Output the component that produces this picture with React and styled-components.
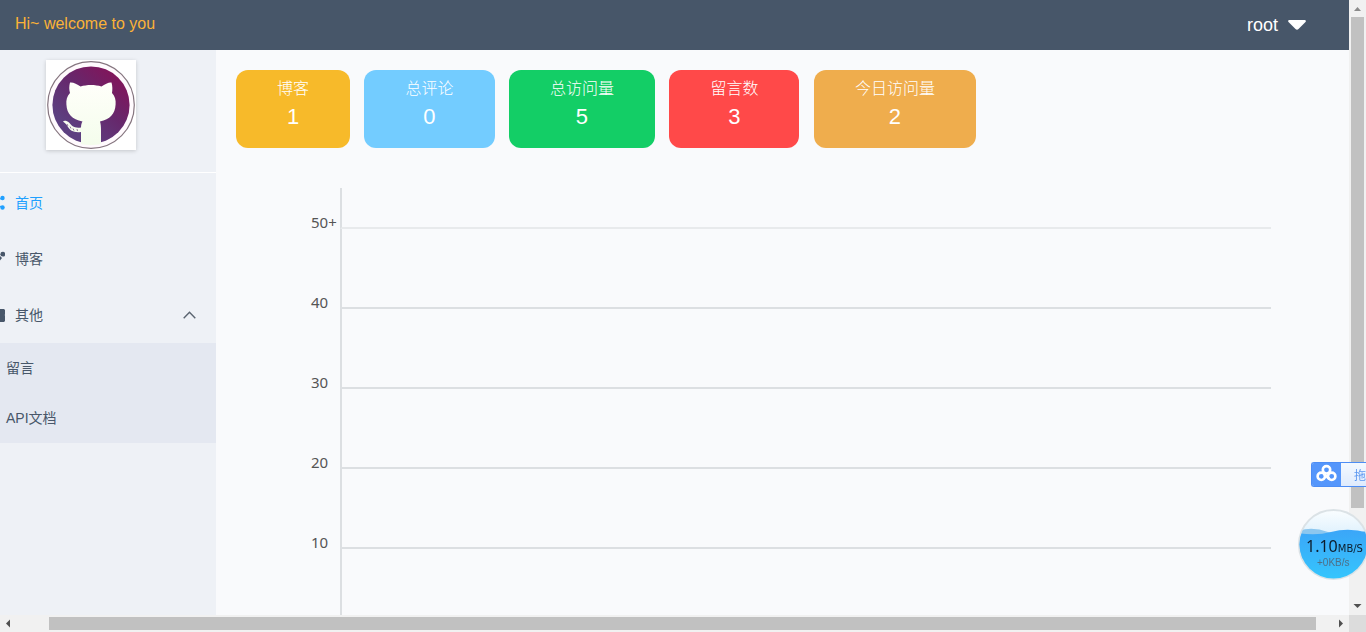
import React from "react";
import styled, { createGlobalStyle } from "styled-components";

const GlobalStyle = createGlobalStyle`
  *, *::before, *::after { box-sizing: border-box; }
  body {
    margin: 0;
    overflow: hidden;
    background: #f9fafc;
    color: #48576a;
    font-family: "Liberation Sans", "Noto Sans CJK SC", sans-serif;
    font-size: 14px;
  }
  button { font: inherit; color: inherit; border: 0; padding: 0; background: none; cursor: pointer; }
  a { color: inherit; text-decoration: none; }
  ul { list-style: none; margin: 0; padding: 0; }
`;

const Frame = styled.div`
  display: grid;
  grid-template-columns: minmax(0, 1fr) 17px;
  grid-template-rows: minmax(0, 1fr) 17px;
  height: 100vh;
`;

const Page = styled.div`
  display: flex;
  flex-direction: column;
  overflow: hidden;
`;

const Header = styled.header`
  display: flex;
  flex: none;
  align-items: center;
  justify-content: space-between;
  height: 50px;
  padding: 0 43px 0 15px;
  background: #475669;
  font-size: 16px;
`;

const Welcome = styled.span`
  padding-bottom: 2px;
  color: #fbb237;
`;

const UserButton = styled.button`
  display: flex;
  align-items: center;
  gap: 10px;
  color: #fff;
  font-size: 18px;
`;

const Body = styled.div`
  display: flex;
  flex: 1;
  min-height: 0;
`;

const Sidebar = styled.aside`
  flex: none;
  width: 216px;
  overflow: hidden;
  background: #eef1f6;
`;

const Profile = styled.div`
  height: 123px;
  margin-bottom: 2px;
  padding: 10px 46px;
  border-bottom: 1px solid #fff;
`;

const Avatar = styled.svg`
  display: block;
  width: 90px;
  height: 90px;
  background: #fff;
  box-shadow: 0 1px 4px rgba(0, 0, 0, 0.18);
`;

const MenuLink = styled.a`
  display: flex;
  align-items: center;
  gap: 10px;
  width: 100%;
  height: 56px;
  padding-right: 20px;
  color: ${(p) => (p.$active ? "#20a0ff" : "#48576a")};
`;

const MenuIcon = styled.svg`
  flex: none;
  width: 5px;
  height: 16px;
`;

const MenuLabel = styled.span`
  flex: 1;
  padding-bottom: 2px;
  text-align: left;
`;

const SubMenu = styled.ul`
  background: #e4e8f1;
`;

const SubLink = styled.a`
  display: flex;
  align-items: center;
  height: 50px;
  padding: 0 0 2px 6px;
`;

const Content = styled.main`
  display: flex;
  flex: 1;
  flex-direction: column;
  gap: 40px;
  min-width: 0;
  padding: 20px 78px 0 20px;
`;

const Stats = styled.section`
  display: flex;
  flex: none;
  justify-content: space-between;
  max-width: 740px;
`;

const StatCard = styled.div`
  height: 78px;
  padding: 5px 41px 0;
  border-radius: 12px;
  background: ${(p) => p.$color};
  color: #fff;
  text-align: center;
  white-space: nowrap;
  line-height: 28px;
`;

const StatTitle = styled.div`
  font-size: 16px;
  font-weight: 300;
`;

const StatValue = styled.div`
  font-size: 22px;
`;

const Chart = styled.section`
  display: flex;
  flex: 1;
  flex-direction: column;
  min-height: 0;
  padding-left: 75px;
  overflow: hidden;
`;

const ChartRow = styled.div`
  display: grid;
  flex: none;
  grid-template-columns: 29px minmax(0, 1fr);
  align-items: end;
  height: ${(p) => (p.$first ? 41 : 80)}px;
`;

const TickLabel = styled.span`
  color: #555;
  font-family: "Noto Sans", sans-serif;
  font-size: 15px;
  line-height: 14px;
`;

const Plot = styled.div`
  grid-column: 2;
  align-self: stretch;
  border-left: 2px solid #dcdfe2;
  border-bottom: 2px solid ${(p) => (p.$light ? "#e8eaec" : "#dcdfe2")};
`;

const ScrollTrack = styled.div`
  display: flex;
  flex-direction: ${(p) => (p.$vertical ? "column" : "row")};
  background: #f1f1f1;
`;

const ScrollThumbArea = styled.div`
  display: flex;
  flex: 1;
  flex-direction: ${(p) => (p.$vertical ? "column" : "row")};
  padding: ${(p) => (p.$vertical ? "0 2px" : "2px 16px 2px 32px")};
`;

const ScrollThumb = styled.div`
  flex: 0 0 ${(p) => p.$size};
  background: #c1c1c1;
`;

const ScrollArrow = styled.svg`
  flex: none;
  width: 17px;
  height: 17px;
  fill: #505050;
`;

const Corner = styled.div`
  background: #dcdcdc;
`;

const UploadTab = styled.button`
  position: fixed;
  right: 0;
  bottom: 145px;
  display: flex;
  align-items: center;
  width: 55px;
  height: 25px;
  overflow: hidden;
  border: 1px solid #4d8df5;
  border-right: 0;
  border-radius: 3px 0 0 3px;
  background: linear-gradient(#f4f9ff, #dfebfd);
  color: #5c97f0;
  font-size: 12px;
`;

const UploadLogo = styled.svg`
  flex: none;
  width: 29px;
  height: 25px;
  margin-right: 13px;
  background: #5596fb;
`;

const SpeedBall = styled.div`
  position: fixed;
  right: -3px;
  bottom: 52px;
  display: grid;
  width: 71px;
  height: 71px;
`;

const BallDrawing = styled.svg`
  grid-area: 1 / 1;
  width: 71px;
  height: 71px;
`;

const BallText = styled.div`
  grid-area: 1 / 1;
  padding: 28px 0 0 8px;
  white-space: nowrap;
`;

const Speed = styled.div`
  color: #0c1c2c;
  font-family: "Noto Sans", sans-serif;
  font-size: 16px;
  line-height: 18px;
`;

const SpeedUnit = styled.small`
  font-family: "DejaVu Sans", sans-serif;
  font-size: 10px;
`;

const Upload = styled.div`
  padding-left: 11px;
  color: #4e7088;
  font-size: 10px;
  line-height: 10px;
`;

const stats = [
  { title: "博客", value: 1, color: "#f7ba2a" },
  { title: "总评论", value: 0, color: "#73ccff" },
  { title: "总访问量", value: 5, color: "#13ce66" },
  { title: "留言数", value: 3, color: "#ff4949" },
  { title: "今日访问量", value: 2, color: "#efad4d" },
];

const ticks = ["50+", "40", "30", "20", "10"];

function AvatarImage() {
  return (
    <Avatar viewBox="0 0 90 90" role="img" aria-label="avatar">
      <defs>
        <linearGradient id="disc" x1="0.85" y1="0.1" x2="0.25" y2="0.8">
          <stop offset="0" stopColor="#82145a" />
          <stop offset="0.5" stopColor="#66286c" />
          <stop offset="1" stopColor="#5d3f80" />
        </linearGradient>
        <linearGradient id="cat" x1="0" y1="0" x2="0" y2="1">
          <stop offset="0" stopColor="#fffffa" />
          <stop offset="1" stopColor="#f4fdec" />
        </linearGradient>
      </defs>
      <circle cx="45" cy="45" r="43.3" fill="#fffafd" stroke="#85757f" strokeWidth="1.2" />
      <circle cx="45" cy="45" r="38.6" fill="url(#disc)" />
      <path
        fill="url(#cat)"
        d="M24 22.5C27 22 31 24 34.5 26.5C41 24.5 49 24.5 55.5 26.5C59 24 63 22 65.500 22.500C66.600 26 66.500 30 66 33C69 36 70 40 69.600 44.500C69 54 64 59.500 54 61.500C54.800 64 55 67 55 70V84C49 85.500 41 85.500 35 84V72C28 73 24 70.500 22 67C21 65 19 63 17 61.500C18 60 21 60.500 23 62.500C26 66 28 68.500 35 67.500C35 65 35.500 63 36.500 61.500C26 59.500 21 54 20.400 44.500C20 40 21 36 24 33C23 30 23 26 24 22.500Z"
      />
      <path d="M21 64l1 2M24 66.500l1 2M27 68.500l1 2M31 69l0.500 2" stroke="#8b6d90" strokeWidth="0.9" />
    </Avatar>
  );
}

export default function App() {
  return (
    <>
      <GlobalStyle />
      <Frame>
        <Page>
          <Header>
            <Welcome>Hi~ welcome to you</Welcome>
            <UserButton type="button">
              root
              <svg width="18" height="10" viewBox="0 0 18 10" aria-hidden="true">
                <path d="M1 0H17Q18.500 0.500 17.500 2L10.500 9Q9 10.300 7.500 9L0.500 2Q-0.500 0.500 1 0Z" fill="#fff" />
              </svg>
            </UserButton>
          </Header>
          <Body>
            <Sidebar>
              <Profile>
                <AvatarImage />
              </Profile>
              <nav>
                <MenuLink href="#home" $active>
                  <MenuIcon viewBox="0 0 5 16" aria-hidden="true">
                    <path d="M0 4L2 3M0 11L2 12.500" stroke="#20a0ff" />
                    <circle cx="2.500" cy="3" r="2.200" fill="#20a0ff" />
                    <circle cx="2.500" cy="12.500" r="2.200" fill="#20a0ff" />
                  </MenuIcon>
                  <MenuLabel>首页</MenuLabel>
                </MenuLink>
                <MenuLink href="#blog">
                  <MenuIcon viewBox="0 0 5 16" aria-hidden="true">
                    <path d="M0 5L2 7L0 9.500Z" fill="#48576a" />
                    <circle cx="2.800" cy="3.200" r="2.400" fill="#48576a" />
                  </MenuIcon>
                  <MenuLabel>博客</MenuLabel>
                </MenuLink>
                <MenuLink as="button" type="button" aria-expanded="true">
                  <MenuIcon viewBox="0 0 5 16" aria-hidden="true">
                    <path d="M0 2H4L5 3V7.500L4.500 8L5 8.500V14L4 15H0Z" fill="#48576a" />
                  </MenuIcon>
                  <MenuLabel>其他</MenuLabel>
                  <svg width="13" height="8" viewBox="0 0 13 8" aria-hidden="true">
                    <path d="M0.700 7.200L6.500 1.200L12.300 7.200" fill="none" stroke="#5a6470" strokeWidth="1.400" />
                  </svg>
                </MenuLink>
                <SubMenu>
                  <li><SubLink href="#messages">留言</SubLink></li>
                  <li><SubLink href="#api">API文档</SubLink></li>
                </SubMenu>
              </nav>
            </Sidebar>
            <Content>
              <Stats>
                {stats.map((s) => (
                  <StatCard key={s.title} $color={s.color}>
                    <StatTitle>{s.title}</StatTitle>
                    <StatValue>{s.value}</StatValue>
                  </StatCard>
                ))}
              </Stats>
              <Chart>
                {ticks.map((t, i) => (
                  <ChartRow key={t} $first={i === 0}>
                    <TickLabel>{t}</TickLabel>
                    <Plot $light={i === 0} />
                  </ChartRow>
                ))}
                <ChartRow>
                  <Plot />
                </ChartRow>
              </Chart>
            </Content>
          </Body>
        </Page>

        <ScrollTrack $vertical aria-hidden="true">
          <ScrollArrow viewBox="0 0 17 17"><path d="M5 11L8.500 7L12 11Z" fill="#8b8b8b" /></ScrollArrow>
          <ScrollThumbArea $vertical><ScrollThumb $size="84.5%" /></ScrollThumbArea>
          <ScrollArrow viewBox="0 0 17 17"><path d="M4.500 6H12.500L8.500 10Z" /></ScrollArrow>
        </ScrollTrack>
        <ScrollTrack aria-hidden="true">
          <ScrollArrow viewBox="0 0 17 17"><path d="M10 4.500V12.500L6 8.500Z" /></ScrollArrow>
          <ScrollThumbArea><ScrollThumb $size="100%" /></ScrollThumbArea>
          <ScrollArrow viewBox="0 0 17 17"><path d="M7 4.500V12.500L11 8.500Z" /></ScrollArrow>
        </ScrollTrack>
        <Corner />
      </Frame>

      <UploadTab type="button">
        <UploadLogo viewBox="0 0 29 25" aria-hidden="true">
          <g fill="none" stroke="#fff" strokeWidth="2.600">
            <circle cx="14.500" cy="7.800" r="3.700" />
            <circle cx="9.300" cy="14.300" r="3.700" />
            <circle cx="19.700" cy="14.300" r="3.700" />
            <path d="M11.800 11.600L17.200 17" />
          </g>
        </UploadLogo>
        拖
      </UploadTab>

      <SpeedBall>
        <BallDrawing viewBox="0 0 71 71" aria-hidden="true">
          <defs>
            <linearGradient id="water" x1="0" y1="0" x2="0" y2="1">
              <stop offset="0" stopColor="#3ba6f8" />
              <stop offset="1" stopColor="#35c6fd" />
            </linearGradient>
            <linearGradient id="air" x1="0" y1="0" x2="0" y2="1">
              <stop offset="0" stopColor="#fafdff" />
              <stop offset="0.350" stopColor="#dff1fd" />
            </linearGradient>
            <clipPath id="ball"><circle cx="35.500" cy="35.500" r="34" /></clipPath>
          </defs>
          <circle cx="35.500" cy="35.500" r="34.500" fill="url(#air)" stroke="#dbe2e6" strokeWidth="2" />
          <g clipPath="url(#ball)">
            <path d="M0 22Q14 17 30 23T71 21V50H0Z" fill="#8cc7ef" />
            <path d="M0 24Q18 27 33 23Q51 18 71 24V71H0Z" fill="url(#water)" />
          </g>
        </BallDrawing>
        <BallText>
          <Speed>1.10<SpeedUnit>MB/S</SpeedUnit></Speed>
          <Upload>+0KB/s</Upload>
        </BallText>
      </SpeedBall>
    </>
  );
}
